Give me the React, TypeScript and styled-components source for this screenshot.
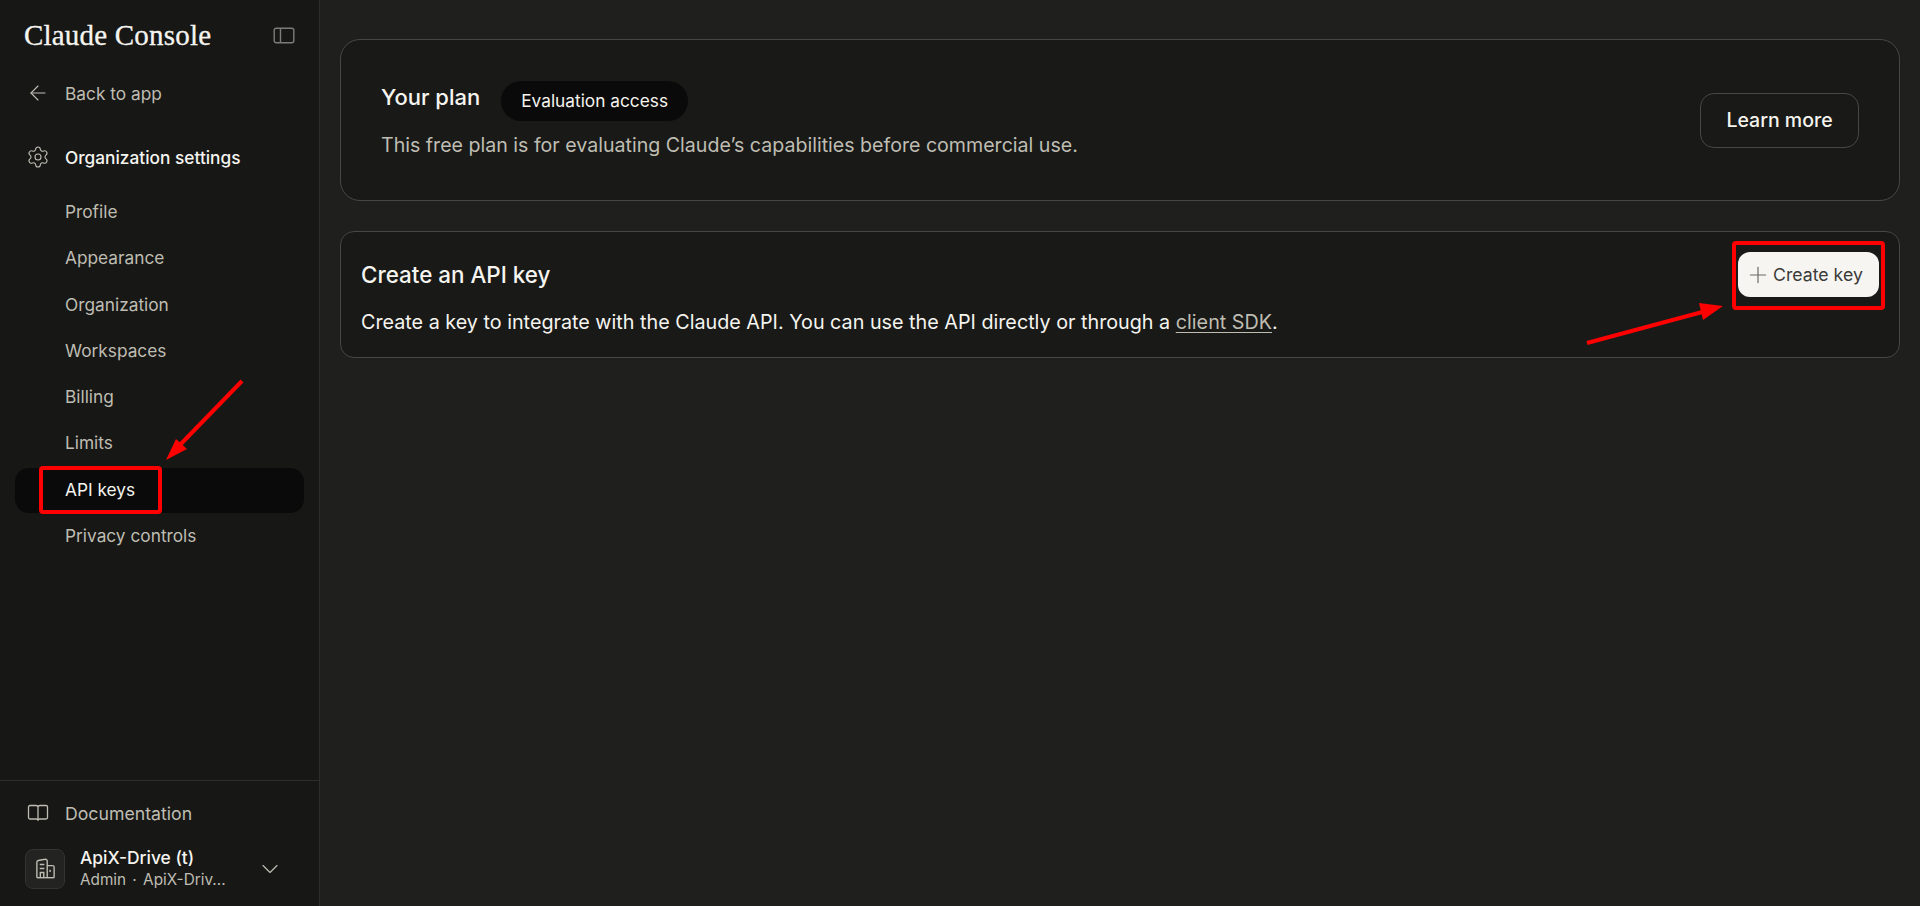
import React from 'react'
import styled, { createGlobalStyle } from 'styled-components'
import { ArrowLeft, ChevronDown, Plus, Settings } from 'lucide-react'

const GlobalStyle = createGlobalStyle`
  html, body {
    margin: 0;
    height: 100%;
    background: #1f1f1e;
  }

  * {
    box-sizing: border-box;
  }

  body {
    font-family: Inter, "Noto Sans", sans-serif;
    color: #f5f4ef;
    overflow: hidden;
  }
`

const Page = styled.div`
  position: relative;
  display: flex;
  width: 1920px;
  height: 906px;
  overflow: hidden;
`

const Sidebar = styled.aside`
  display: flex;
  flex-direction: column;
  flex: 0 0 320px;
  border-right: 1px solid #2d2d2c;
  background: #171716;
`

const SidebarHead = styled.div`
  display: flex;
  align-items: center;
  justify-content: space-between;
  height: 70px;
  padding: 0 24px 0 24px;
  color: #7d7c77;
`

const Logo = styled.div`
  font-family: "Liberation Serif", serif;
  font-size: 29px;
  letter-spacing: 0.2px;
  color: #f5f4ef;
  -webkit-text-stroke: 0.3px #f5f4ef;
`

const Nav = styled.nav`
  display: flex;
  flex-direction: column;
  flex: 1;
  padding: 0 15px;
`

const Row = styled.div<{ $strong?: boolean; $gap?: number }>`
  display: flex;
  align-items: center;
  gap: 15px;
  height: 46px;
  padding-left: 11px;
  margin-bottom: ${({ $gap }) => $gap || 0}px;
  font-size: 17.3px;
  font-weight: ${({ $strong }) => ($strong ? 500 : 400)};
  color: ${({ $strong }) => ($strong ? '#f5f4ef' : '#bfbdb2')};

  svg {
    flex: 0 0 24px;
    color: #bfbdb2;
  }
`

const DocRow = styled(Row)`
  font-size: 17.7px;
`

const SubItem = styled.div<{ $active?: boolean }>`
  display: flex;
  align-items: center;
  height: 45px;
  margin-top: ${({ $active }) => ($active ? 1 : 0)}px;
  margin-bottom: ${({ $active }) => ($active ? 0.3 : 1.3)}px;
  padding-left: 50px;
  padding-bottom: ${({ $active }) => ($active ? 2 : 0)}px;
  border-radius: 14px;
  font-size: 17.3px;
  background: ${({ $active }) => ($active ? '#0a0a0a' : 'transparent')};
  color: ${({ $active }) => ($active ? '#f5f4ef' : '#bfbdb2')};
`

const SubList = styled.div`
  display: flex;
  flex-direction: column;
  margin-top: 9px;
`

const SidebarFoot = styled.div`
  display: flex;
  flex-direction: column;
  height: 126px;
  padding: 9px 15px 0;
  border-top: 1px solid #2d2d2c;
`

const OrgRow = styled.div`
  display: flex;
  align-items: center;
  margin-top: 10px;
  padding: 0 20px 0 10px;
`

const OrgIcon = styled.div`
  display: flex;
  align-items: center;
  justify-content: center;
  flex: 0 0 40px;
  height: 40px;
  border: 1px solid #333332;
  border-radius: 8px;
  background: #232322;
  color: #bfbdb2;
`

const OrgText = styled.div`
  display: flex;
  flex-direction: column;
  flex: 1;
  margin-left: 15px;
`

const OrgName = styled.div`
  font-size: 17.4px;
  font-weight: 500;
  line-height: 23px;
`

const OrgMeta = styled.div`
  font-size: 15.3px;
  line-height: 22px;
  color: #bfbdb2;
  word-spacing: 2px;
`

const Main = styled.main`
  display: flex;
  flex-direction: column;
  flex: 1;
  gap: 30px;
  padding: 39px 20px 0;
`

const PlanCard = styled.section`
  display: flex;
  align-items: center;
  justify-content: space-between;
  height: 162px;
  padding: 0 40px;
  border: 1px solid #474745;
  border-radius: 20px;
  background: #191918;
`

const PlanTitleRow = styled.div`
  display: flex;
  align-items: flex-start;
  gap: 21px;
  margin-bottom: 9px;
`

const PlanTitle = styled.h2`
  margin: 0;
  font-size: 22px;
  line-height: 32px;
  font-weight: 500;
`

const Badge = styled.span`
  display: flex;
  align-items: center;
  height: 40px;
  padding: 0 20px;
  border-radius: 20px;
  font-size: 17.3px;
  background: #0a0a0a;
`

const Muted = styled.p`
  margin: 0;
  font-size: 19.6px;
  line-height: 30px;
  color: #bfbdb2;
`

const GhostButton = styled.button`
  width: 159px;
  height: 55px;
  border: 1px solid #474745;
  border-radius: 14px;
  font: 500 19.5px Inter, sans-serif;
  color: #f5f4ef;
  background: transparent;
`

const KeyCard = styled.section`
  display: flex;
  align-items: center;
  justify-content: space-between;
  height: 127px;
  padding: 0 20px;
  border: 1px solid #474745;
  border-radius: 14px;
  background: #191918;
`

const KeyTitle = styled.h2`
  margin: 9px 0 19px;
  font-size: 22.4px;
  font-weight: 500;
`

const KeyBody = styled.p`
  margin: 0;
  font-size: 19.75px;
  line-height: 30px;
`

const DocLink = styled.a`
  color: #bfbdb2;
  text-decoration: underline;
  text-underline-offset: 3px;
`

const CreateButton = styled.button`
  display: flex;
  align-items: center;
  gap: 2px;
  width: 141px;
  height: 45px;
  margin-bottom: 40px;
  padding: 0 0 0 7px;
  border: 0;
  border-radius: 12px;
  font: 400 17.7px Inter, sans-serif;
  color: #3a3a38;
  background: #f6f5f1;

  svg {
    color: #6b6a66;
  }
`

// annotations painted on top of the screenshot
const RedBox = styled.div<{ $x: number; $y: number; $w: number; $h: number }>`
  position: absolute;
  left: ${({ $x }) => $x}px;
  top: ${({ $y }) => $y}px;
  width: ${({ $w }) => $w}px;
  height: ${({ $h }) => $h}px;
  border: 4px solid #fe0000;
  border-radius: 4px;
`

const Overlay = styled.svg`
  position: absolute;
  inset: 0;
  pointer-events: none;
`

const subItems = ['Profile', 'Appearance', 'Organization', 'Workspaces', 'Billing', 'Limits', 'API keys', 'Privacy controls']

const SidebarToggle = () => (
  <svg width="22" height="17" viewBox="0 0 22 17" fill="none" stroke="currentColor" strokeWidth="1.4">
    <rect x="1.2" y="1.2" width="19.6" height="14.6" rx="2" />
    <line x1="7.5" y1="1.2" x2="7.5" y2="15.8" />
  </svg>
)

const DocsIcon = () => (
  <svg width="24" height="20" viewBox="0 0 24 20" fill="none" stroke="currentColor" strokeWidth="1.3">
    <path d="M4 2.5h6c1 0 2 .5 2 1.5 0-1 1-1.5 2-1.5h6a1.5 1.5 0 0 1 1.5 1.5v10.5a1.5 1.5 0 0 1-1.5 1.5h-6.5c-.7 0-1.5.6-1.5 1.5 0-.9-.8-1.5-1.5-1.5H4a1.5 1.5 0 0 1-1.5-1.5V4A1.5 1.5 0 0 1 4 2.5z" />
    <path d="M12 4v13.5" />
  </svg>
)

const BuildingIcon = () => (
  <svg width="23" height="23" viewBox="0 0 20 20" fill="none" stroke="currentColor" strokeWidth="1.2">
    <path d="M2.5 18V4.5a1.5 1.5 0 0 1 1.2-1.5l6-1a1.5 1.5 0 0 1 1.8 1.5V18" />
    <path d="M11.5 7.5h4.5a1.5 1.5 0 0 1 1.5 1.5v9" />
    <path d="M2.5 18h15" />
    <path d="M5 6.5h4M5 10h4M14 11v2M5.5 18v-4.5h3V18" />
  </svg>
)

const App = () => {
  return (
    <Page>
      <GlobalStyle />
      <Sidebar>
        <SidebarHead>
          <Logo>Claude Console</Logo>
          <SidebarToggle />
        </SidebarHead>
        <Nav>
          <Row $gap={18}>
            <ArrowLeft size={24} strokeWidth={1.1} />
            Back to app
          </Row>
          <Row $strong>
            <Settings size={24} strokeWidth={1.1} />
            Organization settings
          </Row>
          <SubList>
            {subItems.map(item => (
              <SubItem key={item} $active={item === 'API keys'}>
                {item}
              </SubItem>
            ))}
          </SubList>
        </Nav>
        <SidebarFoot>
          <DocRow>
            <DocsIcon />
            Documentation
          </DocRow>
          <OrgRow>
            <OrgIcon>
              <BuildingIcon />
            </OrgIcon>
            <OrgText>
              <OrgName>ApiX-Drive (t)</OrgName>
              <OrgMeta>Admin · ApiX-Driv...</OrgMeta>
            </OrgText>
            <ChevronDown size={28} strokeWidth={1} color="#bfbdb2" />
          </OrgRow>
        </SidebarFoot>
      </Sidebar>
      <Main>
        <PlanCard>
          <div>
            <PlanTitleRow>
              <PlanTitle>Your plan</PlanTitle>
              <Badge>Evaluation access</Badge>
            </PlanTitleRow>
            <Muted>This free plan is for evaluating Claude’s capabilities before commercial use.</Muted>
          </div>
          <GhostButton>Learn more</GhostButton>
        </PlanCard>
        <KeyCard>
          <div>
            <KeyTitle>Create an API key</KeyTitle>
            <KeyBody>
              Create a key to integrate with the Claude API. You can use the API directly or through a{' '}
              <DocLink>client SDK</DocLink>.
            </KeyBody>
          </div>
          <CreateButton>
            <Plus size={26} strokeWidth={1.1} />
            Create key
          </CreateButton>
        </KeyCard>
      </Main>
      <RedBox $x={39} $y={466} $w={123} $h={48} />
      <RedBox $x={1732} $y={241} $w={153} $h={69} />
      <Overlay width="1920" height="906" viewBox="0 0 1920 906">
        <line x1="242" y1="381" x2="176" y2="449" stroke="#fe0000" strokeWidth="4" />
        <polygon points="166,460 176,439 187,449" fill="#fe0000" />
        <line x1="1587" y1="343" x2="1706" y2="311" stroke="#fe0000" strokeWidth="4" />
        <polygon points="1723,306 1699,303 1703,320" fill="#fe0000" />
      </Overlay>
    </Page>
  )
}

export default App
